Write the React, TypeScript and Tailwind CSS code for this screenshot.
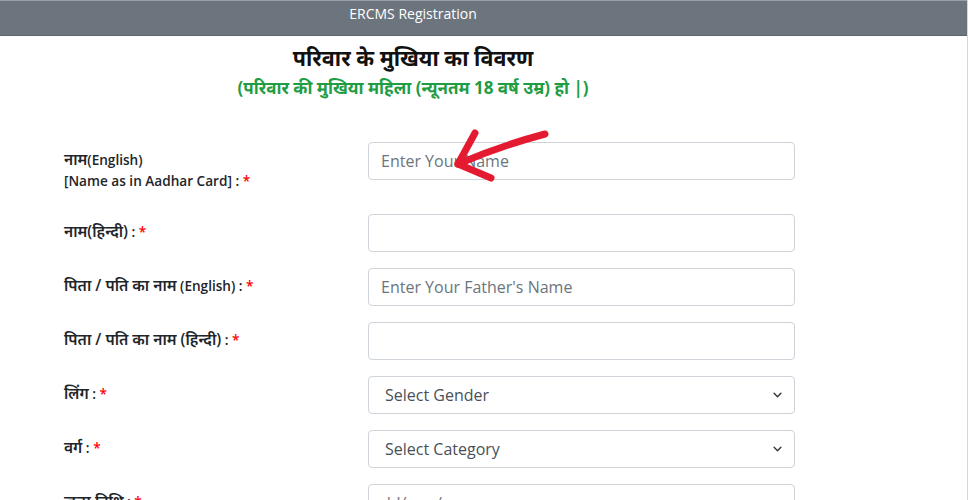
import React from "react";

const Star = () => <span className="text-[#ff0000]">*</span>;
const H = ({ children }: { children: React.ReactNode }) => (
  <span className="text-[15.5px]">{children}</span>
);

function Row({
  label,
  children,
}: {
  label: React.ReactNode;
  children: React.ReactNode;
}) {
  return (
    <div className="flex mb-4">
      <div className="w-[304px] pt-[7px] pb-[7px] text-[13.6px] leading-[21px] font-semibold text-[#212529]">
        {label}
      </div>
      <div className="w-[427px]">{children}</div>
    </div>
  );
}

const inputCls =
  "block w-full h-[38px] px-3 text-[16px] leading-[24px] text-[#495057] placeholder:text-[#6c757d] bg-white border border-[#ced4da] rounded-[4px] outline-none";

function Chevron() {
  return (
    <svg
      className="absolute right-[13px] top-1/2 -translate-y-1/2 pointer-events-none"
      width="9"
      height="7"
      viewBox="0 0 16 12"
    >
      <path
        d="M2 3l6 6 6-6"
        fill="none"
        stroke="#343a40"
        strokeWidth="2.6"
        strokeLinecap="round"
        strokeLinejoin="round"
      />
    </svg>
  );
}

function Select({ text }: { text: string }) {
  return (
    <div className="relative">
      <select className={inputCls + " appearance-none pl-4"} defaultValue="">
        <option value="">{text}</option>
      </select>
      <Chevron />
    </div>
  );
}

export default function App() {
  return (
    <div
      className="w-[968px] h-[500px] overflow-hidden bg-white border-r border-[#d6d6d6] relative"
      style={{ fontFamily: '"Open Sans", "Noto Sans", sans-serif' }}
    >
      <div className="h-[36px] bg-[#6c757d] border-t border-[#9aa0a6] border-b border-b-[#5d646b]">
        <div className="w-[826px] text-center text-white text-[14px] leading-[20px] pt-[3px]">
          ERCMS Registration
        </div>
      </div>

      <div className="w-[826px] text-center mt-[6px]">
        <h2 className="text-[21.5px] leading-[32px] font-bold text-[#111]">
          परिवार के मुखिया का विवरण
        </h2>
        <p className="text-[17px] leading-[24px] font-bold text-[#1f9d44] mt-[2px]">
          (परिवार की मुखिया महिला (न्यूनतम 18 वर्ष उम्र) हो |)
        </p>
      </div>

      <div className="ml-[64px] mt-[42px]">
        <Row
          label={
            <>
              <H>नाम</H>(English)
              <br />
              [Name as in Aadhar Card] : <Star />
            </>
          }
        >
          <input className={inputCls} placeholder="Enter Your Name" />
        </Row>
        <Row
          label={
            <>
              <H>नाम(हिन्दी)</H> : <Star />
            </>
          }
        >
          <input className={inputCls} />
        </Row>
        <Row
          label={
            <>
              <H>पिता / पति का नाम</H> (English) : <Star />
            </>
          }
        >
          <input className={inputCls} placeholder="Enter Your Father's Name" />
        </Row>
        <Row
          label={
            <>
              <H>पिता / पति का नाम (हिन्दी)</H> : <Star />
            </>
          }
        >
          <input className={inputCls} />
        </Row>
        <Row
          label={
            <>
              <H>लिंग</H> : <Star />
            </>
          }
        >
          <Select text="Select Gender" />
        </Row>
        <Row
          label={
            <>
              <H>वर्ग</H> : <Star />
            </>
          }
        >
          <Select text="Select Category" />
        </Row>
        <Row
          label={
            <>
              <H>जन्म तिथि</H> : <Star />
            </>
          }
        >
          <input
            className={inputCls + " bg-[#e9ecef]"}
            placeholder="dd/mm/yyyy"
            readOnly
          />
        </Row>
      </div>

      <svg
        className="absolute left-0 top-0 pointer-events-none"
        width="968"
        height="500"
      >
        <g
          fill="none"
          stroke="#e41b30"
          strokeWidth="7"
          strokeLinecap="round"
          strokeLinejoin="round"
        >
          <path d="M545 134 Q500 146 458 164" />
          <path d="M475 133 L458 164 L491 178" />
        </g>
      </svg>
    </div>
  );
}
